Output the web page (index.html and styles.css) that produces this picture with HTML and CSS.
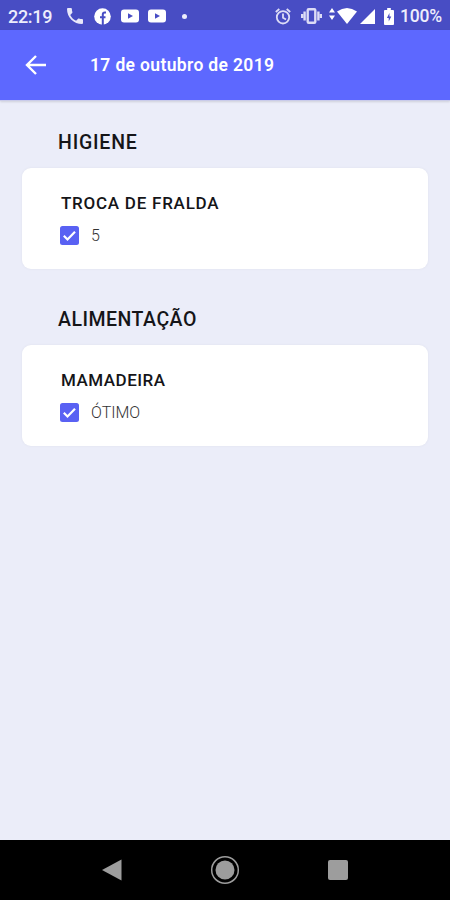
FILE: index.html
```html
<!DOCTYPE html>
<html lang="pt-BR">

<head>
    <meta charset="UTF-8">
    <meta name="viewport" content="width=device-width, initial-scale=1.0">
    <title>Agenda</title>
    <link rel="stylesheet" href="styles.css">
</head>

<body>

    <div class="status-bar">
        <span class="clock">22:19</span>
        <svg class="icon-phone" width="16" height="16" viewBox="3 3 18 18"><path fill="#e8e8fa" d="M6.62 10.79c1.44 2.83 3.76 5.14 6.59 6.59l2.2-2.2c.27-.27.67-.36 1.02-.24 1.12.37 2.33.57 3.57.57.55 0 1 .45 1 1V20c0 .55-.45 1-1 1-9.39 0-17-7.61-17-17 0-.55.45-1 1-1h3.5c.55 0 1 .45 1 1 0 1.25.2 2.45.57 3.57.11.35.03.74-.25 1.02l-2.2 2.2z"/></svg>
        <svg class="icon-facebook" width="17" height="17" viewBox="0 0 17 17"><circle cx="8.5" cy="8.5" r="8.3" fill="#fff"/><path fill="none" stroke="#484dc4" stroke-width="2" d="M12 4.5h-1.2q-2 0-2 2V17M6 9.2h5.5"/></svg>
        <svg class="icon-video" width="18" height="14" viewBox="0 0 18 14"><rect y=".5" width="18" height="13" rx="3" fill="#fff"/><path fill="#484dc4" d="M7 4.3l5 2.7-5 2.7z"/></svg>
        <svg class="icon-video" width="18" height="14" viewBox="0 0 18 14"><rect y=".5" width="18" height="13" rx="3" fill="#fff"/><path fill="#484dc4" d="M7 4.3l5 2.7-5 2.7z"/></svg>
        <span class="dot"></span>
        <div class="status-right">
            <svg width="16" height="17" viewBox="0 0 16 17" fill="none" stroke="#dcdcf6" stroke-width="1.8"><circle cx="8" cy="9.3" r="6.2"/><path d="M.8 4l3.5-3M15.2 4l-3.5-3M8 5.5v4.2l3 1.8"/></svg>
            <svg class="icon-vibrate" width="21" height="16" viewBox="0 0 21 16" fill="none" stroke="#dcdcf6" stroke-width="2.4"><rect x="6.7" y="1.2" width="7.6" height="13.6" rx="1"/><path d="M3.6 3.5v9M17.4 3.5v9M1 6v4M20 6v4"/></svg>
            <svg class="icon-arrows" width="6" height="12" viewBox="0 0 6 12"><path fill="#fff" d="M3 0l3 4.5H0zM0 7.5h6L3 12z"/></svg>
            <svg class="icon-wifi" width="20" height="16" viewBox="0 0 20 16"><path fill="#fff" d="M0 3.5Q10-3.5 20 3.5L10 16z"/></svg>
            <svg class="icon-signal" width="15" height="15" viewBox="0 0 15 15"><path fill="#fff" d="M15 0v15H0z"/></svg>
            <svg class="icon-battery" width="10" height="17" viewBox="0 0 11 17" preserveAspectRatio="none"><path fill="#fff" d="M3.5 0h4v2H10q1 0 1 1v13q0 1-1 1H1q-1 0-1-1V3q0-1 1-1h2.5z"/><path fill="#484dc4" d="M6 5L3.2 10h2v3.5L8 8.5H6z"/></svg>
            <span class="battery-level">100%</span>
        </div>
    </div>

    <div class="header">
        <svg width="22" height="20" viewBox="0 0 22 20" fill="none" stroke="#fff" stroke-width="2.4"><path d="M21 10H2M11 1L2 10l9 9"/></svg>
        <span class="header-title">17 de outubro de 2019</span>
    </div>

    <div class="content">
        <div class="section-title higiene">HIGIENE</div>
        <div class="card">
            <div class="card-title troca">TROCA DE FRALDA</div>
            <div class="item">
                <svg width="19" height="19" viewBox="0 0 19 19"><rect width="19" height="19" rx="2.5" fill="#5961f3"/><path fill="none" stroke="#fff" stroke-width="2.2" d="M3.8 9.8l3.7 3.7L15 5.7"/></svg>
                <span>5</span>
            </div>
        </div>

        <div class="section-title">ALIMENTAÇÃO</div>
        <div class="card">
            <div class="card-title">MAMADEIRA</div>
            <div class="item">
                <svg width="19" height="19" viewBox="0 0 19 19"><rect width="19" height="19" rx="2.5" fill="#5961f3"/><path fill="none" stroke="#fff" stroke-width="2.2" d="M3.8 9.8l3.7 3.7L15 5.7"/></svg>
                <span>ÓTIMO</span>
            </div>
        </div>
    </div>

    <div class="nav-bar">
        <svg width="20" height="22" viewBox="0 0 20 22"><path fill="#9d9d9d" d="M19.5.5v21L0 11z"/></svg>
        <svg width="30" height="30" viewBox="0 0 30 30"><circle cx="15" cy="15" r="13.3" fill="none" stroke="#9d9d9d" stroke-width="1.5"/><circle cx="15" cy="15" r="9.5" fill="#9d9d9d"/></svg>
        <svg width="20" height="20" viewBox="0 0 20 20"><rect width="20" height="20" rx="2" fill="#9d9d9d"/></svg>
    </div>

</body>

</html>
```

FILE: styles.css
```css
* {
    margin: 0;
    padding: 0;
    box-sizing: border-box;
    font-family: Roboto, sans-serif;
}

body {
    height: 900px;
    background: #ebedf9;
    color: #151518;
    display: flex;
    flex-direction: column;
    white-space: nowrap;
}

svg {
    display: block;
    flex: none;
}

.status-bar {
    height: 30px;
    background: #484dc4;
    color: #ededfc;
    display: flex;
    align-items: center;
    padding: 2px 8px 0 8px;
    font-size: 18px;
    font-weight: 500;
}

.clock {
    width: 59px;
    letter-spacing: -0.3px;
}

.icon-facebook {
    margin-left: 11px;
}

.icon-video {
    margin-left: 9px;
}

.icon-facebook + .icon-video {
    margin-left: 10px;
}

.dot {
    width: 5px;
    height: 5px;
    margin-left: 16px;
    border-radius: 50%;
    background: #ededfc;
}

.status-right {
    margin-left: auto;
    display: flex;
    align-items: center;
}

.icon-vibrate {
    margin-left: 10px;
}

.icon-arrows {
    margin: -4px 2px 0 7px;
}

.icon-signal {
    margin: 1px 9px 0 3px;
}

.icon-battery {
    margin-right: 6px;
}

.battery-level {
    font-size: 17.5px;
    letter-spacing: -0.2px;
}

.header {
    height: 71px;
    background: #5d68ff;
    border-bottom: 1px solid #c9cbea;
    box-shadow: 0 1px 2px rgba(0, 0, 0, 0.12);
    color: #fff;
    display: flex;
    align-items: center;
    gap: 43px;
    padding-left: 25px;
}

.header-title {
    font-size: 17.5px;
    font-weight: 600;
    letter-spacing: 0.35px;
}

.content {
    flex: 1;
    padding: 29px 22px 0;
}

.section-title {
    margin-left: 36px;
    height: 38px;
    line-height: 26px;
    font-size: 19.5px;
    font-weight: 500;
    letter-spacing: 0.5px;
}

.higiene {
    letter-spacing: 0.8px;
}

.card {
    height: 101px;
    margin-bottom: 38px;
    padding: 24px 39px 0;
    background: #fff;
    border-radius: 9px;
    box-shadow: 0 0 3px rgba(0, 0, 0, 0.05);
}

.card-title {
    height: 34px;
    line-height: 22px;
    font-size: 17px;
    font-weight: 500;
    letter-spacing: 0.5px;
}

.troca {
    letter-spacing: 0.75px;
}

.item {
    display: flex;
    align-items: center;
    gap: 12px;
    height: 19px;
    margin-left: -1px;
    font-size: 16px;
    font-weight: 300;
    color: #333;
}

.nav-bar {
    height: 60px;
    background: #000;
    display: flex;
    align-items: center;
    justify-content: space-between;
    padding: 0 102px;
}
```
